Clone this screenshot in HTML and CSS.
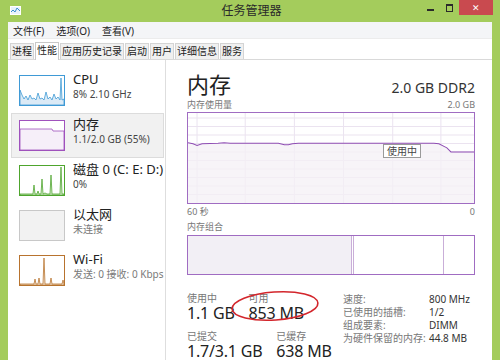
FILE: index.html
```html
<!DOCTYPE html>
<html lang="zh-CN">
<head>
  <meta charset="UTF-8">
  <title>任务管理器</title>
  <link rel="stylesheet" href="styles.css">
</head>
<body>
  <div class="window">
    <div class="titlebar">
      <svg class="app-icon" width="11" height="9" viewBox="0 0 11 9">
        <rect x="0.5" y="0.5" width="10" height="8" fill="#e8f2fb" stroke="#ffffff"/>
        <polyline points="1,6 3,4 5,6 7,2 10,5" fill="none" stroke="#3a8fd0" stroke-width="1"/>
      </svg>
      <div class="title">任务管理器</div>
      <div class="controls">
        <span class="btn btn-min"><i></i></span>
        <span class="btn btn-max"><i></i></span>
        <span class="btn btn-close">✕</span>
      </div>
    </div>

    <div class="frame">
      <div class="menubar">
        <span>文件(F)</span>
        <span>选项(O)</span>
        <span>查看(V)</span>
      </div>
      <div class="tabs">
        <span class="tab">进程</span>
        <span class="tab active">性能</span>
        <span class="tab">应用历史记录</span>
        <span class="tab">启动</span>
        <span class="tab">用户</span>
        <span class="tab">详细信息</span>
        <span class="tab">服务</span>
      </div>

      <div class="main">
        <div class="sidebar">
          <div class="item">
            <svg class="thumb" viewBox="0 0 46 31">
              <rect x="0.5" y="0.5" width="45" height="30" fill="#fff" stroke="#3f9ad6"/>
              <polygon points="1,15 3,20 5,24 7,21 9,25 11,20 13,24 15,23 17,25 19,18 21,24 23,23 25,25 27,17 29,24 31,22 33,25 35,19 37,24 39,22 41,25 42,3 43,25 45,24 45,30 1,30" fill="#dbeaf6" stroke="#3f9ad6" stroke-width="0.8"/>
            </svg>
            <div class="item-text">
              <div class="item-name">CPU</div>
              <div class="item-sub">8% 2.10 GHz</div>
            </div>
          </div>
          <div class="item selected">
            <svg class="thumb" viewBox="0 0 46 31">
              <rect x="0.5" y="0.5" width="45" height="30" fill="#fff" stroke="#a052bd"/>
              <polygon points="1,9 33,9 34,11 45,11 45,30 1,30" fill="#f6eff9" stroke="#a052bd" stroke-width="0.8"/>
            </svg>
            <div class="item-text">
              <div class="item-name">内存</div>
              <div class="item-sub">1.1/2.0 GB (55%)</div>
            </div>
          </div>
          <div class="item">
            <svg class="thumb" viewBox="0 0 46 31">
              <rect x="0.5" y="0.5" width="45" height="30" fill="#fff" stroke="#4ea52d"/>
              <polygon points="1,29 14,29 15,20 16,29 18,29 19,26 20,29 22,29 23,14 24,29 26,28 28,29 31,29 32,10 33,29 41,29 42,2 43,29 45,29 45,30 1,30" fill="#e3f2dc" stroke="#4ea52d" stroke-width="0.8"/>
            </svg>
            <div class="item-text">
              <div class="item-name">磁盘 0 (C: E: D:)</div>
              <div class="item-sub">0%</div>
            </div>
          </div>
          <div class="item">
            <svg class="thumb" viewBox="0 0 46 31">
              <rect x="0.5" y="0.5" width="45" height="30" fill="#f2f2f2" stroke="#c8c8c8"/>
            </svg>
            <div class="item-text">
              <div class="item-name">以太网</div>
              <div class="item-sub muted">未连接</div>
            </div>
          </div>
          <div class="item">
            <svg class="thumb" viewBox="0 0 46 31">
              <rect x="0.5" y="0.5" width="45" height="30" fill="#fff" stroke="#b8732e"/>
              <polygon points="1,29 15,29 16,24 17,29 19,29 20,23 21,29 24,29 25,3 26,29 31,29 32,23 33,29 43,29 44,25 45,29 45,30 1,30" fill="#f5e9dc" stroke="#b8732e" stroke-width="0.8"/>
            </svg>
            <div class="item-text">
              <div class="item-name">Wi-Fi</div>
              <div class="item-sub muted">发送: 0 接收: 0 Kbps</div>
            </div>
          </div>
        </div>

        <div class="detail">
          <div class="detail-head">
            <div class="detail-title">内存</div>
            <div class="detail-spec">2.0 GB DDR2</div>
          </div>
          <div class="graph-label">
            <span>内存使用量</span>
            <span>2.0 GB</span>
          </div>
          <div class="graph">
            <svg class="graph-svg" viewBox="0 0 285 89" preserveAspectRatio="none">
              <g stroke="#ebe3f0" stroke-width="1">
                <line x1="9" y1="0" x2="9" y2="89"/>
                <line x1="57" y1="0" x2="57" y2="89"/>
                <line x1="106" y1="0" x2="106" y2="89"/>
                <line x1="155" y1="0" x2="155" y2="89"/>
                <line x1="204" y1="0" x2="204" y2="89"/>
                <line x1="252" y1="0" x2="252" y2="89"/>
                <line x1="0" y1="5" x2="285" y2="5"/>
                <line x1="0" y1="13.4" x2="285" y2="13.4"/>
                <line x1="0" y1="21.8" x2="285" y2="21.8"/>
                <line x1="0" y1="30.2" x2="285" y2="30.2"/>
                <line x1="0" y1="38.6" x2="285" y2="38.6"/>
                <line x1="0" y1="47" x2="285" y2="47"/>
                <line x1="0" y1="55.4" x2="285" y2="55.4"/>
                <line x1="0" y1="63.8" x2="285" y2="63.8"/>
                <line x1="0" y1="72.2" x2="285" y2="72.2"/>
                <line x1="0" y1="80.6" x2="285" y2="80.6"/>
              </g>
              <polygon points="0,29.5 5,30.5 9,32 14,30.5 30,30 36,29.5 42,30 90,30 96,31.5 100,31.5 104,30.5 110,30 245,30 250,30.5 258,34.5 262,38.5 285,38.5 285,89 0,89" fill="#f4f0f6" fill-opacity="0.75"/>
              <polyline points="0,29.5 5,30.5 9,32 14,30.5 30,30 36,29.5 42,30 90,30 96,31.5 100,31.5 104,30.5 110,30 245,30 250,30.5 258,34.5 262,38.5 285,38.5" fill="none" stroke="#8e4db3" stroke-width="1"/>
            </svg>
            <div class="tip">使用中</div>
          </div>
          <div class="axis">
            <span>60 秒</span>
            <span>0</span>
          </div>
          <div class="comp-label">内存组合</div>
          <div class="comp">
            <div class="seg seg-used"></div>
            <div class="seg seg-mod"></div>
            <div class="seg seg-free"></div>
          </div>

          <div class="stats">
            <div class="stats-left">
              <div class="stat-row">
                <div class="stat">
                  <div class="stat-label">使用中</div>
                  <div class="stat-value">1.1 GB</div>
                </div>
                <div class="stat">
                  <div class="stat-label">可用</div>
                  <div class="stat-value">853 MB</div>
                </div>
              </div>
              <div class="stat-row second">
                <div class="stat">
                  <div class="stat-label">已提交</div>
                  <div class="stat-value">1.7/3.1 GB</div>
                </div>
                <div class="stat">
                  <div class="stat-label">已缓存</div>
                  <div class="stat-value">638 MB</div>
                </div>
              </div>
            </div>
            <div class="specs">
              <span class="spec-label">速度:</span><span class="spec-value">800 MHz</span>
              <span class="spec-label">已使用的插槽:</span><span class="spec-value">1/2</span>
              <span class="spec-label">组成要素:</span><span class="spec-value">DIMM</span>
              <span class="spec-label">为硬件保留的内存:</span><span class="spec-value">44.8 MB</span>
            </div>
            <svg class="mark" viewBox="0 0 90 34">
              <ellipse cx="45" cy="17" rx="43" ry="14" fill="none" stroke="#d3262c" stroke-width="1.6" transform="rotate(-4 45 17)"/>
            </svg>
          </div>
        </div>
      </div>
    </div>
  </div>
</body>
</html>
```

FILE: styles.css
```css
body {
  margin: 0;
  background: #a4cc5c;
  font-family: "Noto Sans", "Noto Sans CJK SC", sans-serif;
  color: #222;
}
.window {
  width: 500px;
  height: 360px;
  overflow: hidden;
  display: flex;
  flex-direction: column;
}
.titlebar {
  height: 22px;
  display: grid;
  grid-template-columns: 1fr auto 1fr;
  align-items: start;
  padding: 0 7px 0 10px;
}
.app-icon {
  margin-top: 6px;
}
.title {
  font-size: 12px;
  line-height: 22px;
  color: #2a2a2a;
}
.controls {
  justify-self: end;
  display: flex;
}
.btn {
  width: 19px;
  height: 15px;
  display: flex;
  justify-content: center;
  align-items: center;
}
.btn-min i {
  width: 7px;
  height: 2px;
  margin-top: 4px;
  background: #2a2a2a;
}
.btn-max i {
  width: 5px;
  height: 5px;
  border: 1px solid #2a2a2a;
  border-top-width: 2px;
}
.btn-close {
  width: 34px;
  background: #c94a4f;
  color: #fff;
  font-size: 9px;
}
.frame {
  flex: 1;
  margin: 0 8px;
  background: #fff;
  display: flex;
  flex-direction: column;
}
.menubar {
  height: 16px;
  background: #f4f5f7;
  display: flex;
  align-items: center;
  padding-left: 5px;
  font-size: 10px;
  border-bottom: 1px solid #ececec;
}
.menubar span {
  margin-right: 12px;
}
.tabs {
  height: 20px;
  display: flex;
  align-items: flex-end;
  padding-left: 2px;
  border-bottom: 1px solid #d9d9d9;
}
.tab {
  height: 15px;
  line-height: 15px;
  padding: 0 1px;
  margin-right: 1px;
  font-size: 10px;
  background: #f0f0f0;
  border: 1px solid #d4d4d4;
  border-bottom: none;
}
.tab.active {
  height: 17px;
  background: #fff;
  border-color: #c8c8c8;
  margin-bottom: -1px;
}
.main {
  flex: 1;
  display: flex;
}
.sidebar {
  width: 157px;
  border-right: 1px solid #dedede;
  padding-top: 8px;
}
.item {
  height: 45px;
  box-sizing: border-box;
  margin: 0 1px 0 3px;
  padding: 6px 7px;
  border: 1px solid transparent;
  display: flex;
  gap: 8px;
}
.item.selected {
  background: #f1f1f1;
  border-color: #dcdcdc;
}
.thumb {
  width: 46px;
  height: 31px;
  flex: none;
}
.item-text {
  margin-top: -4px;
}
.item-name {
  font-size: 13px;
  line-height: 17px;
  white-space: nowrap;
}
.item-sub {
  font-size: 10px;
  line-height: 12px;
  color: #444;
  white-space: nowrap;
}
.item-sub.muted {
  color: #7a7a7a;
}
.detail {
  flex: 1;
  padding: 9px 17px 0 21px;
}
.detail-head {
  display: flex;
  justify-content: space-between;
  align-items: baseline;
}
.detail-title {
  font-size: 22px;
  line-height: 30px;
}
.detail-spec {
  font-size: 14px;
  color: #333;
}
.graph-label, .axis {
  display: flex;
  justify-content: space-between;
  font-size: 9px;
  line-height: 12px;
  color: #777;
}
.graph {
  position: relative;
  height: 92px;
  margin-top: 1px;
  box-sizing: border-box;
  border: 1.5px solid #a06cc2;
}
.graph-svg {
  display: block;
  width: 100%;
  height: 100%;
}
.tip {
  position: absolute;
  left: 195px;
  top: 31px;
  padding: 0 3px;
  font-size: 10px;
  line-height: 12px;
  background: #fff;
  border: 1px solid #9a9a9a;
  color: #444;
}
.axis {
  margin-top: 2px;
}
.comp-label {
  margin-top: 3px;
  font-size: 9px;
  line-height: 12px;
  color: #777;
}
.comp {
  margin-top: 2px;
  height: 40px;
  box-sizing: border-box;
  border: 1.5px solid #a06cc2;
  display: flex;
}
.seg-used {
  width: 163px;
  background: #f2eff5;
  border-right: 1px solid #c9aed8;
}
.seg-mod {
  width: 89px;
  margin-left: 1px;
  border-left: 1px solid #c9aed8;
  border-right: 1px solid #c9aed8;
}
.seg-free {
  flex: 1;
}
.stats {
  position: relative;
  margin-top: 17px;
  display: flex;
  align-items: flex-start;
}
.stats-left {
  width: 156px;
  flex: none;
}
.stat-row {
  display: flex;
  gap: 14px;
}
.stat-row.second {
  margin-top: 8px;
}
.stat-label {
  font-size: 10px;
  line-height: 12px;
  color: #777;
}
.stat-value {
  font-size: 16px;
  line-height: 18px;
  color: #222;
  white-space: nowrap;
  letter-spacing: -0.2px;
}
.specs {
  display: grid;
  grid-template-columns: 86px auto;
  align-content: start;
  font-size: 10px;
  line-height: 13px;
  margin-top: 1px;
}
.spec-label {
  color: #777;
  white-space: nowrap;
}
.spec-value {
  color: #333;
  white-space: nowrap;
}
.mark {
  position: absolute;
  left: 43px;
  top: -3px;
  width: 90px;
  height: 34px;
}
```
